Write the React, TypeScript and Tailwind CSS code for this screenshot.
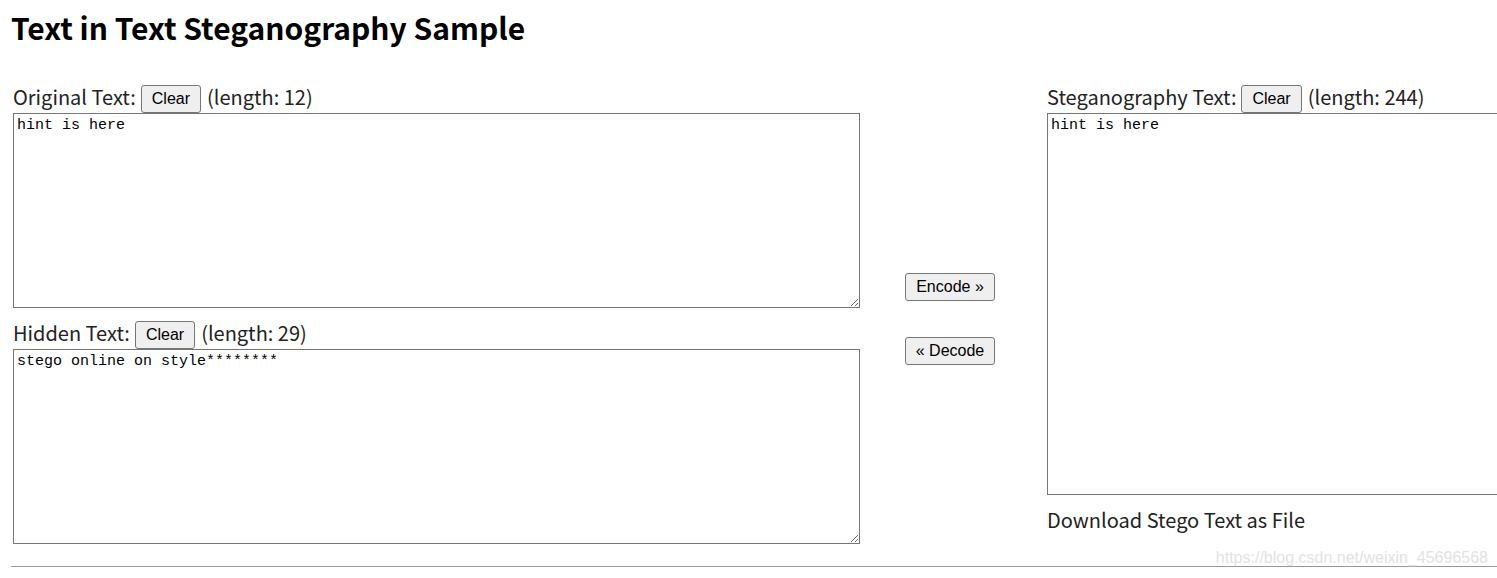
export default function App() {
  const label = "text-[20px] leading-[24px] text-[#222]"
  const btn =
    "h-[28px] px-[10px] text-[16px] leading-[18px] text-black bg-[#efefef] border border-[#767676] rounded-[3px] shrink-0"
  const area =
    "block resize-y border border-[#767676] p-[3px] text-[15px] leading-[18px] text-black bg-white outline-none shrink-0"
  const mono = { fontFamily: '"Liberation Mono", monospace' }
  const arial = { fontFamily: '"Liberation Sans", Arial, sans-serif' }

  return (
    <div
      className="relative w-[1497px] h-[578px] overflow-hidden bg-white pl-[11px]"
      style={{ fontFamily: '"Noto Sans CJK JP", "Noto Sans", sans-serif' }}
    >
      <h1 className="pt-[7px] text-[30px] font-bold leading-[40px] text-black">
        Text in Text Steganography Sample
      </h1>

      <div className="flex mt-[38px] w-[1600px]">
        {/* left column */}
        <div className="w-[849px] shrink-0 pl-[2px] flex flex-col">
          <div className="flex items-start">
            <span className={label}>Original Text:</span>
            <button className={`${btn} ml-[5px] mr-[6px]`} style={arial}>Clear</button>
            <span className={label}>(length: 12)</span>
          </div>
          <textarea className={`${area} w-[847px] h-[195px]`} style={mono} defaultValue="hint is here" />

          <div className="flex items-start mt-[13px]">
            <span className={label}>Hidden Text:</span>
            <button className={`${btn} ml-[5px] mr-[6px]`} style={arial}>Clear</button>
            <span className={label}>(length: 29)</span>
          </div>
          <textarea
            className={`${area} w-[847px] h-[195px]`}
            style={mono}
            defaultValue="stego online on style********"
          />
        </div>

        {/* middle buttons */}
        <div className="w-[180px] shrink-0 flex flex-col items-center pt-[188px] gap-[36px]">
          <button className={btn} style={arial}>Encode »</button>
          <button className={btn} style={arial}>« Decode</button>
        </div>

        {/* right column */}
        <div className="w-[520px] shrink-0 pl-[7px] flex flex-col">
          <div className="flex items-start">
            <span className={label}>Steganography Text:</span>
            <button className={`${btn} ml-[5px] mr-[6px]`} style={arial}>Clear</button>
            <span className={label}>(length: 244)</span>
          </div>
          <textarea className={`${area} w-[470px] h-[382px]`} style={mono} defaultValue="hint is here" />
          <div className={`${label} mt-[13px]`}>Download Stego Text as File</div>
        </div>
      </div>

      <div className="mt-[22px] border-t border-[#999] w-[1600px]" />

      {/* screenshot watermark */}
      <div
        className="absolute right-[9px] top-[548px] text-[16px] leading-[20px] text-[#e2e2e2]"
        style={arial}
      >
        https://blog.csdn.net/weixin_45696568
      </div>
    </div>
  )
}
